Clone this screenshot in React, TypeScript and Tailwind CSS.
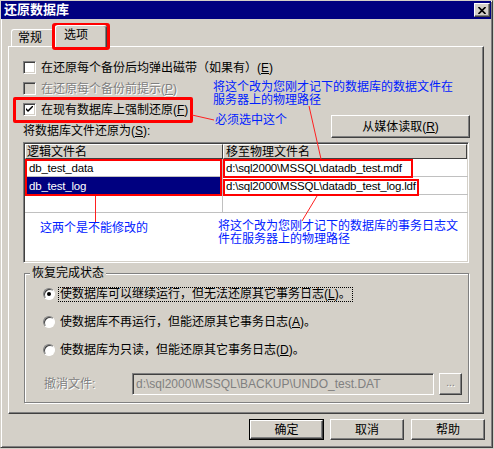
import React from "react";

const raised =
  "border border-t-white border-l-white border-r-[#404040] border-b-[#404040] shadow-[inset_-1px_-1px_0_#808080]";
const sunken =
  "border border-t-[#808080] border-l-[#808080] border-r-white border-b-white shadow-[inset_1px_1px_0_#404040,inset_-1px_-1px_0_#d4d0c8]";

const Check = ({ checked, disabled }: { checked?: boolean; disabled?: boolean }) => (
  <div
    className={`w-[13px] h-[13px] shrink-0 flex items-center justify-center ${sunken} ${
      disabled ? "bg-[#d4d0c8]" : "bg-white"
    }`}
  >
    {checked && (
      <svg width="7" height="7" viewBox="0 0 7 7">
        <path d="M0 2 L0 4 L2 6 L7 1 L7 -1 L2 4 Z" fill="#000" />
      </svg>
    )}
  </div>
);

const Radio = ({ checked }: { checked?: boolean }) => (
  <div
    className={`w-[12px] h-[12px] shrink-0 rounded-full bg-white flex items-center justify-center border border-t-[#808080] border-l-[#808080] border-r-white border-b-white shadow-[inset_1px_1px_0_#404040]`}
  >
    {checked && <div className="w-[4px] h-[4px] rounded-full bg-black" />}
  </div>
);

const Btn = ({ children, className = "" }: { children: React.ReactNode; className?: string }) => (
  <div className={`flex items-center justify-center bg-[#d4d0c8] ${raised} ${className}`}>{children}</div>
);

const Lat = ({ children }: { children: React.ReactNode }) => (
  <span className="text-[11.5px] tracking-[-0.2px]">{children}</span>
);

export default function App() {
  return (
    <div className="w-[494px] h-[449px] bg-[#d4d0c8] relative overflow-hidden text-[12px] leading-[14px] text-black font-['Liberation_Sans','Noto_Sans_CJK_SC',sans-serif]">
      <div className="w-[493px] h-[448px] flex flex-col border border-t-[#d4d0c8] border-l-[#d4d0c8] border-r-[#404040] border-b-[#404040] shadow-[inset_1px_1px_0_#fff,inset_-1px_-1px_0_#808080]">
        {/* title bar */}
        <div className="h-[18px] mr-[1px] bg-[#000080] flex items-center justify-between pl-[3px] pr-[1px]">
          <span className="text-white font-bold text-[13px] leading-[16px]">还原数据库</span>
          <div className={`w-[16px] h-[14px] bg-[#d4d0c8] flex items-center justify-center ${raised}`}>
            <svg width="8" height="7" viewBox="0 0 8 7">
              <path d="M0.5 0 L7.5 7 M7.5 0 L0.5 7" stroke="#000" strokeWidth="1.6" />
            </svg>
          </div>
        </div>

        {/* tabs */}
        <div className="h-[27px] flex items-end pl-[10px]">
          <div className="w-[46px] h-[17px] flex items-center pl-[6px] border-t border-l border-r border-t-white border-l-white border-r-[#404040] rounded-t-[3px]">
            常规
          </div>
          <div className="relative z-10 -ml-[2px] -mb-[1px] w-[52px] h-[22px] flex items-center pl-[8px] pb-[4px] bg-[#d4d0c8] border-t border-l border-r border-t-white border-l-white border-r-[#404040] rounded-t-[3px] shadow-[inset_-1px_0_0_#808080]">
            选项
          </div>
        </div>

        {/* panel */}
        <div className={`ml-[7px] w-[476px] h-[368px] pl-[14px] pt-[10px] flex flex-col ${raised}`}>
          <div className="flex items-center h-[21px] gap-[5px]">
            <Check />
            <span>
              在还原每个备份后均弹出磁带（如果有）(<u>E</u>)
            </span>
          </div>
          <div className="flex items-center h-[21px] gap-[5px]">
            <Check disabled />
            <span className="text-[#808080] [text-shadow:1px_1px_0_#fff]">
              在还原每个备份前提示(<u>P</u>)
            </span>
          </div>
          <div className="flex justify-between items-end w-[447px]">
            <div className="flex flex-col">
              <div className="flex items-center h-[21px] gap-[5px]">
                <Check checked />
                <span>
                  在现有数据库上强制还原(<u>F</u>)
                </span>
              </div>
              <div className="h-[22px] flex items-center">
                将数据库文件还原为(<u>S</u>):
              </div>
            </div>
            <Btn className="w-[139px] h-[23px] mb-[4px]">
              从媒体读取(<u>R</u>)
            </Btn>
          </div>

          {/* file table */}
          <div className={`w-[446px] h-[121px] bg-white flex flex-col ${sunken}`}>
            <div className="flex h-[15px] ml-[1px] mt-[1px] bg-[#d4d0c8]">
              <div className="w-[198px] pl-[1px] flex items-center border-t border-l border-r border-b border-t-white border-l-white border-r-[#404040] border-b-[#404040]">
                逻辑文件名
              </div>
              <div className="flex-1 pl-[2px] mr-[1px] flex items-center border-t border-l border-r border-b border-t-white border-l-white border-r-[#404040] border-b-[#404040]">
                移至物理文件名
              </div>
            </div>
            {[
              ["db_test_data", "d:\\sql2000\\MSSQL\\datadb_test.mdf", false],
              ["db_test_log", "d:\\sql2000\\MSSQL\\datadb_test_log.ldf", true],
              ["", "", false],
            ].map(([a, b, sel], i) => (
              <div key={i} className="flex h-[18px] ml-[1px] border-b border-[#c0c0c0]">
                <div
                  className={`w-[198px] pl-[4px] flex items-center border-r border-[#c0c0c0] ${
                    sel ? "bg-[#000080] text-white" : ""
                  }`}
                >
                  <Lat>{a as string}</Lat>
                </div>
                <div className="flex-1 pl-[3px] flex items-center">
                  <Lat>{b as string}</Lat>
                </div>
              </div>
            ))}
          </div>

          {/* recovery state group */}
          <div className="relative mt-[10px] ml-[1px] w-[445px] h-[130px] border border-[#808080] shadow-[inset_1px_1px_0_#fff,1px_1px_0_#fff] pl-[18px] pt-[6px] flex flex-col">
            <span className="absolute -top-[8px] left-[5px] px-[2px] bg-[#d4d0c8]">恢复完成状态</span>
            <div className="flex items-center h-[28px] gap-[3px]">
              <Radio checked />
              <span className="border border-dotted border-black px-[1px] leading-[13px]">
                使数据库可以继续运行，但无法还原其它事务日志(<u>L</u>)。
              </span>
            </div>
            <div className="flex items-center h-[28px] gap-[5px]">
              <Radio />
              <span>
                使数据库不再运行，但能还原其它事务日志(<u>A</u>)。
              </span>
            </div>
            <div className="flex items-center h-[28px] gap-[5px]">
              <Radio />
              <span>
                使数据库为只读，但能还原其它事务日志(<u>D</u>)。
              </span>
            </div>
            <div className="flex items-center h-[22px] mt-[9px]">
              <span className="w-[89px] pl-[1px] text-[#808080] [text-shadow:1px_1px_0_#fff]">撤消文件:</span>
              <div className={`w-[302px] h-[22px] pl-[3px] flex items-center bg-[#d4d0c8] ${sunken}`}>
                <span className="text-[12px] text-[#808080]">d:\sql2000\MSSQL\BACKUP\UNDO_test.DAT</span>
              </div>
              <Btn className="ml-[5px] w-[23px] h-[22px]">
                <span className="text-[#808080] text-[10px] [text-shadow:1px_1px_0_#fff] pb-[2px]">...</span>
              </Btn>
            </div>
          </div>
        </div>

        {/* dialog buttons */}
        <div className="flex justify-end pr-[7px] mt-[5px]">
          <div className="border border-black">
            <Btn className="w-[73px] h-[19px]">确定</Btn>
          </div>
          <Btn className="ml-[6px] w-[74px] h-[21px]">取消</Btn>
          <Btn className="ml-[7px] w-[74px] h-[21px]">帮助</Btn>
        </div>
      </div>

      {/* annotations */}
      <div className="absolute left-[52px] top-[23px] w-[58px] h-[27px] border-[3px] border-[#ff0000] rounded-[3px]" />
      <div className="absolute left-[13px] top-[97px] w-[180px] h-[26px] border-[3px] border-[#ff0000] rounded-[2px]" />
      <div className="absolute left-[25px] top-[159px] w-[197px] h-[37px] border-2 border-[#ff0000]" />
      <div className="absolute left-[223px] top-[159px] w-[190px] h-[19px] border-2 border-[#ff0000]" />
      <div className="absolute left-[223px] top-[179px] w-[196px] h-[17px] border-2 border-[#ff0000]" />

      <svg className="absolute left-0 top-0 pointer-events-none" width="494" height="449">
        <g stroke="#ff2020" strokeWidth="1" fill="none">
          <line x1="192" y1="115" x2="214" y2="120" />
          <line x1="309" y1="106" x2="321" y2="159" />
          <line x1="95.5" y1="196" x2="95.5" y2="222" />
          <line x1="317" y1="196" x2="302" y2="221" />
        </g>
      </svg>

      <div className="absolute left-[213px] top-[81px] text-[#0020ff] leading-[13px]">
        <div>将这个改为您刚才记下的数据库的数据文件在</div>
        <div>服务器上的物理路径</div>
      </div>
      <div className="absolute left-[215px] top-[113px] text-[#0020ff]">必须选中这个</div>
      <div className="absolute left-[40px] top-[221px] text-[#0020ff]">这两个是不能修改的</div>
      <div className="absolute left-[218px] top-[220px] text-[#0020ff] leading-[13px]">
        <div>将这个改为您刚才记下的数据库的事务日志文</div>
        <div>件在服务器上的物理路径</div>
      </div>
    </div>
  );
}
